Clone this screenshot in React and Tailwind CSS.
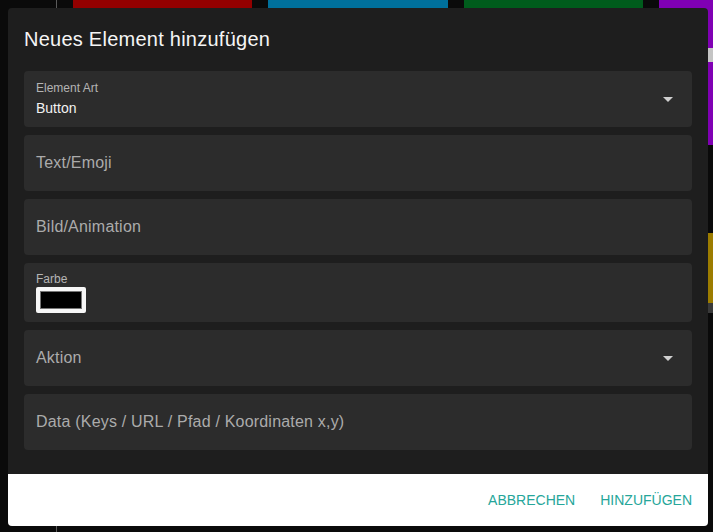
import React from 'react';

const font = { fontFamily: '"Liberation Sans", Arial, sans-serif' };

function ArrowDown() {
  return (
    <svg width="24" height="24" viewBox="0 0 24 24" className="shrink-0">
      <path d="M7 10l5 5 5-5z" fill="#d0d0d0" />
    </svg>
  );
}

function PlainField({ label, arrow }) {
  return (
    <div className="h-[56px] rounded-[4px] bg-[#2c2c2c] pl-3 pr-3 flex items-center justify-between">
      <span className="text-[16px] tracking-[0.2px] text-[#ababab] leading-[18px]">{label}</span>
      {arrow && <ArrowDown />}
    </div>
  );
}

export default function App() {
  return (
    <div className="relative w-[713px] h-[532px] overflow-hidden bg-[#0a0a0a]" style={font}>
      {/* background page behind the modal */}
      <div className="flex h-full">
        <div className="w-[57px] h-full border-r border-[#5a5a5a] shrink-0" />
        <div className="flex gap-4 pl-4">
          <div className="w-[179px] h-[145px] bg-[#930000] shrink-0" />
          <div className="w-[180px] h-[145px] bg-[#00709c] shrink-0" />
          <div className="w-[179px] h-[145px] bg-[#005c1c] shrink-0" />
          <div className="w-[180px] shrink-0 flex flex-col">
            <div className="h-[145px] bg-[#8000b4] pl-[49px] pt-[48px]">
              <div className="w-[8px] h-[14px] bg-[#c4c4c4]" />
            </div>
            <div className="h-[88px]" />
            <div className="h-[70px] bg-[#9c7c00]" />
            <div className="h-[10px] bg-[#3a3a3a]" />
          </div>
        </div>
      </div>

      {/* modal */}
      <div className="absolute left-[8px] top-[8px] w-[700px] h-[518px] rounded-[4px] overflow-hidden bg-[#1e1e1e] flex flex-col">
        <div className="flex-1 px-4">
          <h2 className="pt-[19px] text-[20px] tracking-[0.25px] leading-[24px] text-[#f5f5f5]">Neues Element hinzufügen</h2>

          <div className="mt-[20px] flex flex-col gap-2">
            <div className="h-[56px] rounded-[4px] bg-[#2c2c2c] pl-3 pr-3 flex items-center justify-between">
              <div className="flex flex-col">
                <span className="text-[12px] leading-4 text-[#b4b4b4]">Element Art</span>
                <span className="mt-[2px] text-[14px] leading-5 text-[#f2f2f2]">Button</span>
              </div>
              <ArrowDown />
            </div>

            <PlainField label="Text/Emoji" />
            <PlainField label="Bild/Animation" />

            <div className="h-[59px] rounded-[4px] bg-[#2c2c2c] pl-3 pt-2">
              <div className="text-[12px] leading-4 text-[#b4b4b4]">Farbe</div>
              <div className="w-[50px] h-[26px] bg-[#f7f7f7] rounded-[2px] p-[4px]">
                <div className="w-full h-full bg-black border border-[#767676]" />
              </div>
            </div>

            <PlainField label="Aktion" arrow />
            <PlainField label="Data (Keys / URL / Pfad / Koordinaten x,y)" />
          </div>
        </div>

        <div className="h-[52px] bg-white flex items-center justify-end gap-[25px] pr-4">
          <button className="text-[14px] text-[#26a69a] uppercase">Abbrechen</button>
          <button className="text-[14px] text-[#26a69a] uppercase">Hinzufügen</button>
        </div>
      </div>
    </div>
  );
}
